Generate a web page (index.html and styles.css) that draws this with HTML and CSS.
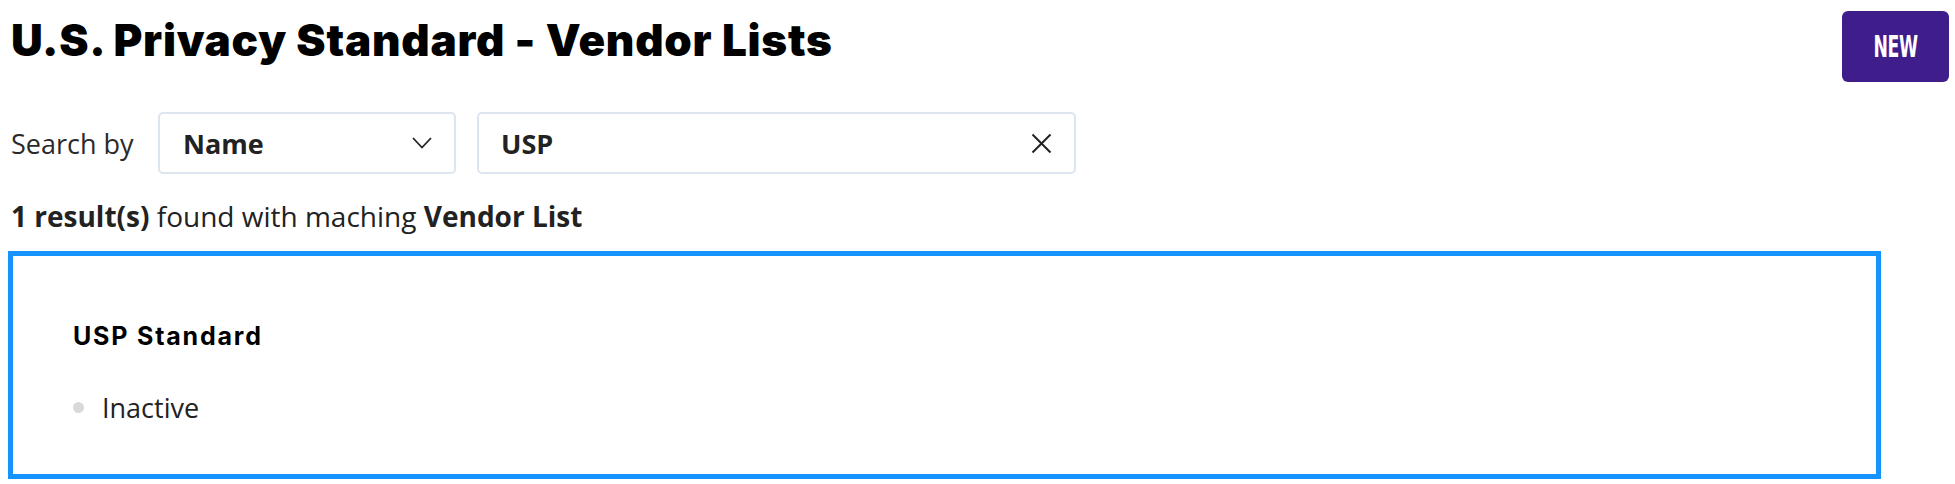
FILE: index.html
```html
<!DOCTYPE html>
<html lang="en">
<head>
<meta charset="utf-8">
<title>U.S. Privacy Standard - Vendor Lists</title>
<link rel="stylesheet" href="styles.css">
</head>
<body>
<div class="page">
  <header class="header">
    <h1 class="title">U.S. Privacy Standard - Vendor Lists</h1>
    <button class="btn-new" type="button"><span class="btn-label">NEW</span></button>
  </header>

  <div class="search-row">
    <span class="search-label">Search by</span>
    <div class="select">
      <span class="select-value">Name</span>
      <svg class="chevron" width="20" height="12" viewBox="0 0 20 12" aria-hidden="true">
        <path d="M1 1 L10 10.5 L19 1" fill="none" stroke="#222" stroke-width="1.8"/>
      </svg>
    </div>
    <div class="input">
      <span class="input-value">USP</span>
      <svg class="clear" width="21" height="21" viewBox="0 0 21 21" aria-hidden="true">
        <path d="M1.5 1.5 L19.5 19.5 M19.5 1.5 L1.5 19.5" fill="none" stroke="#222" stroke-width="2"/>
      </svg>
    </div>
  </div>

  <p class="result-line"><b>1 result(s)</b> found with maching <b>Vendor List</b></p>

  <div class="card">
    <div class="card-title">USP Standard</div>
    <div class="card-status"><span class="dot"></span><span>Inactive</span></div>
  </div>
</div>
</body>
</html>
```

FILE: styles.css
```css
html, body {
  margin: 0;
  padding: 0;
  background: #fff;
}

.page {
  padding: 11px 6px 0 8px;
  font-family: "Open Sans", "Noto Sans", sans-serif;
  color: #222;
}

.header {
  display: flex;
  justify-content: space-between;
  align-items: flex-start;
}

.title {
  margin: 0;
  padding: 3px 0 0 3px;
  font-family: Inter, "Noto Sans", sans-serif;
  font-weight: 900;
  font-size: 44px;
  line-height: 52px;
  color: #000;
  letter-spacing: 0.75px;
}

.btn-new {
  width: 107px;
  height: 71px;
  border: 0;
  border-radius: 6px;
  background: #3f1e8c;
  color: #fff;
  font-family: "DejaVu Sans Condensed", "DejaVu Sans", sans-serif;
  font-stretch: condensed;
  font-weight: 700;
  font-size: 30px;
  padding: 0;
  display: flex;
  align-items: center;
  justify-content: center;
}

.btn-label {
  display: inline-block;
  transform: scaleX(0.64);
  letter-spacing: -0.5px;
}

.search-row {
  display: flex;
  align-items: center;
  margin-top: 30px;
  height: 62px;
}

.search-label {
  font-size: 27px;
  padding-left: 3px;
  width: 147px;
  color: #2a2a2a;
}

.select, .input {
  box-sizing: border-box;
  height: 62px;
  border: 2px solid #dde6ee;
  border-radius: 5px;
  display: flex;
  align-items: center;
  justify-content: space-between;
}

.select {
  width: 298px;
  padding: 0 22px 0 23px;
}

.input {
  width: 599px;
  margin-left: 21px;
  padding: 0 22px 0 22px;
}

.select-value, .input-value {
  font-size: 27px;
  font-weight: 700;
  color: #222;
}

.result-line {
  margin: 0;
  padding: 24px 0 0 3px;
  font-size: 28px;
  line-height: 36px;
  color: #222;
}

.card {
  margin-top: 17px;
  width: 1873px;
  height: 228px;
  box-sizing: border-box;
  border: 5px solid #1593ff;
  padding: 66px 60px 0;
}

.card-title {
  font-family: Inter, "Noto Sans", sans-serif;
  font-weight: 700;
  font-size: 25px;
  line-height: 29px;
  letter-spacing: 1.8px;
  color: #000;
}

.card-status {
  display: flex;
  align-items: center;
  gap: 18px;
  margin-top: 38px;
  font-size: 27px;
  line-height: 37px;
  color: #222;
}

.dot {
  width: 11px;
  height: 11px;
  border-radius: 50%;
  background: #d9d9d9;
}
```
